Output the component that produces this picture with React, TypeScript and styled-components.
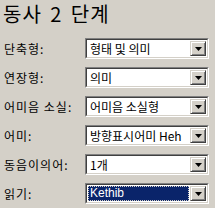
import React from "react";
import styled, { createGlobalStyle } from "styled-components";

const Global = createGlobalStyle`
  html, body { margin: 0; padding: 0; background: #d4d0c8; }
  body { font-family: "Noto Sans CJK KR", "Noto Sans", sans-serif; }
`;

const Panel = styled.div`
  width: 215px;
  height: 208px;
  background: #d4d0c8;
  box-sizing: border-box;
  padding: 0 6px 0 3px;
  overflow: hidden;
`;

const Title = styled.div`
  font-size: 20px;
  line-height: 28px;
  height: 28px;
  color: #000;
  margin-bottom: 10px;
  letter-spacing: 1px;
  word-spacing: 3px;
  white-space: nowrap;
`;

const Rows = styled.div`
  display: flex;
  flex-direction: column;
  gap: 8px;
`;

const Row = styled.div`
  display: flex;
  align-items: center;
  height: 21px;
`;

const Label = styled.div`
  width: 81px;
  font-size: 12px;
  letter-spacing: 1px;
  color: #000;
  padding-left: 1px;
  white-space: nowrap;
`;

const Combo = styled.div`
  flex: 1;
  height: 21px;
  box-sizing: border-box;
  border-top: 1px solid #808080;
  border-left: 1px solid #808080;
  border-bottom: 1px solid #ffffff;
  border-right: 1px solid #ffffff;
  display: flex;
`;

const ComboInner = styled.div`
  flex: 1;
  display: flex;
  box-sizing: border-box;
  border-top: 1px solid #404040;
  border-left: 1px solid #404040;
  border-bottom: 1px solid #d4d0c8;
  border-right: 1px solid #d4d0c8;
  background: #fff;
  padding: 1px;
`;

const Field = styled.div<{ $selected?: boolean }>`
  flex: 1;
  box-sizing: border-box;
  font-size: 12px;
  line-height: 13px;
  padding-left: 2px;
  margin-right: 1px;
  white-space: nowrap;
  overflow: hidden;
  display: flex;
  align-items: center;
  color: ${(p) => (p.$selected ? "#fff" : "#000")};
  background: ${(p) => (p.$selected ? "#0a246a" : "transparent")};
  outline: ${(p) => (p.$selected ? "1px dotted #d4d0c8" : "none")};
  outline-offset: -1px;
  font-family: ${(p) => (p.$selected ? '"Liberation Sans", sans-serif' : "inherit")};
`;

const Button = styled.div`
  width: 16px;
  box-sizing: border-box;
  background: #d4d0c8;
  border-top: 1px solid #d4d0c8;
  border-left: 1px solid #d4d0c8;
  border-bottom: 1px solid #404040;
  border-right: 1px solid #404040;
  box-shadow: inset 1px 1px 0 #fff, inset -1px -1px 0 #808080;
  display: flex;
  align-items: center;
  justify-content: center;
`;

const Arrow = () => (
  <svg width="7" height="4" viewBox="0 0 7 4">
    <path d="M0 0h7L3.5 4z" fill="#000" />
  </svg>
);

const rows: { label: string; value: string; selected?: boolean }[] = [
  { label: "단축형:", value: "형태 및 의미" },
  { label: "연장형:", value: "의미" },
  { label: "어미음 소실:", value: "어미음 소실형" },
  { label: "어미:", value: "방향표시어미 Heh" },
  { label: "동음이의어:", value: "1개" },
  { label: "읽기:", value: "Kethib", selected: true },
];

export default function App() {
  return (
    <Panel>
      <Global />
      <Title>동사 2 단계</Title>
      <Rows>
        {rows.map((r) => (
          <Row key={r.label}>
            <Label>{r.label}</Label>
            <Combo>
              <ComboInner>
                <Field $selected={r.selected}>{r.value}</Field>
                <Button>
                  <Arrow />
                </Button>
              </ComboInner>
            </Combo>
          </Row>
        ))}
      </Rows>
    </Panel>
  );
}
